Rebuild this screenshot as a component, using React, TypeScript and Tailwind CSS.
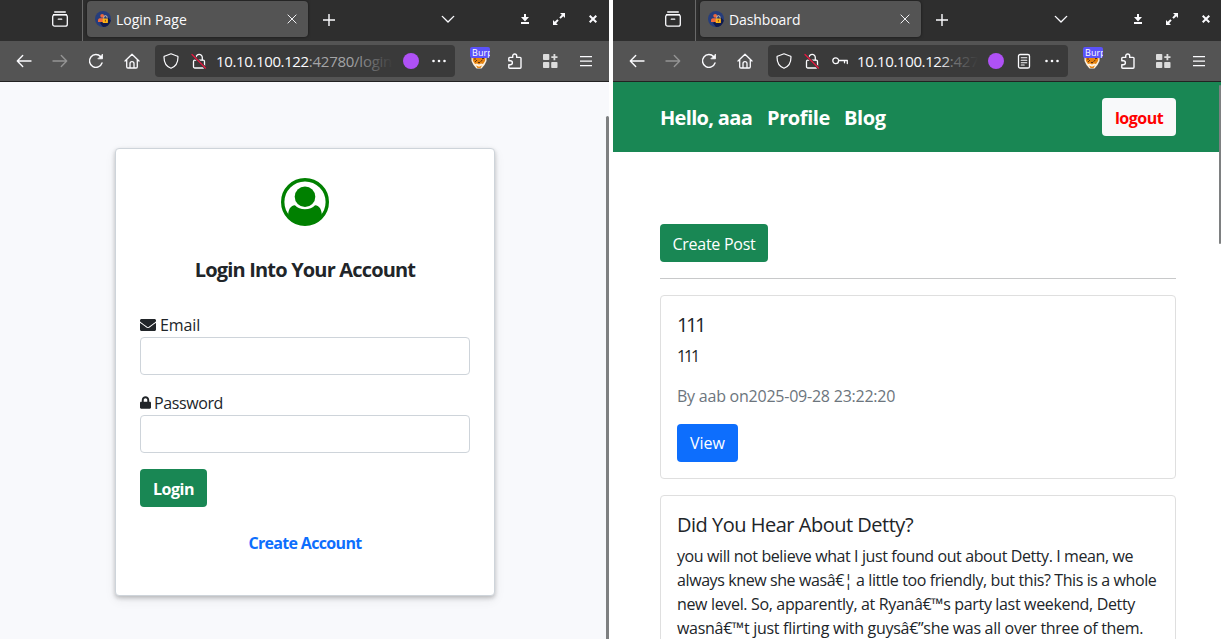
import type { ReactNode } from "react";
import { FaEnvelope, FaLock } from "react-icons/fa";

function Favicon() {
  return (
    <svg width="16" height="16" viewBox="0 0 16 16">
      <circle cx="8" cy="8" r="8" fill="#263d7c" />
      <path d="M8 16a8 8 0 0 0 7.8-6.5L12.5 6 5 12z" fill="#101a4c" />
      <circle cx="7.2" cy="4.8" r="1.9" fill="#f0683c" />
      <path d="M3 11V9.2C3 7.5 4.6 7.2 6 7.2h2.5V11z" fill="#f0683c" />
      <path d="M8.7 7.5V6.4a1.7 1.7 0 0 1 3.4 0v1.1" fill="none" stroke="#e4cfb0" strokeWidth="0.9" />
      <rect x="7.7" y="7.4" width="5.2" height="4.6" rx="0.6" fill="#fbb316" />
      <rect x="9.9" y="8.8" width="0.9" height="1.8" fill="#7a3c10" />
    </svg>
  );
}

function Stroke({ children, size = 16, className = "", width = 1.3 }: { children: ReactNode; size?: number; className?: string; width?: number }) {
  return (
    <svg width={size} height={size} viewBox="0 0 16 16" fill="none" stroke="currentColor" strokeWidth={width} strokeLinecap="round" strokeLinejoin="round" className={"shrink-0 " + className}>
      {children}
    </svg>
  );
}

function TabBar({ title, tight }: { title: string; tight?: boolean }) {
  return (
    <div className="flex h-[41px] bg-[#2e2e2e] text-[#fbfbfe]">
      <div className="flex w-[83px] shrink-0 items-center justify-end border-r border-[#696969] pr-[14px] pb-[3px]">
        <Stroke size={16}>
          <path d="M2.7 1h10.6M1.5 3.7h13" />
          <rect x="0.7" y="3.8" width="14.6" height="11.4" rx="2" />
          <path d="M6.3 8.2h3.4" />
        </Stroke>
      </div>
      <div className="mt-px ml-1 flex h-9 w-[221px] shrink-0 items-center rounded bg-[#545454] pr-[11px] pl-2 shadow-[0_0_3px_#00000088]">
        <Favicon />
        <span className={tight ? "ml-[5px] pt-0.5 text-sm tracking-[-0.1px]" : "ml-[5px] pt-0.5 text-sm"}>{title}</span>
        <Stroke size={10} className="ml-auto" width={1.5}>
          <path d="m1.5 1.5 13 13m0-13-13 13" />
        </Stroke>
      </div>
      <Stroke size={12} className="mt-[14px] ml-[15px]" width={1.9}>
        <path d="M8 .5v15M.5 8h15" />
      </Stroke>
      <Stroke size={14} className="mt-[12px] ml-[106px]" width={1.6}>
        <path d="m1.5 5 6.5 6.5L14.5 5" />
      </Stroke>
      <svg width="10" height="12" viewBox="0 0 10 12" fill="currentColor" className="mt-[13px] ml-[65px] shrink-0">
        <path d="M4 1h2v3h3L5 8.5 1 4h3zM1 9h8v2H1z" />
      </svg>
      <svg width="12" height="12" viewBox="0 0 12 12" fill="currentColor" className="mt-[13px] ml-[23px] shrink-0">
        <path d="M7 0h5v5l-1.7-1.7-2.6 2.5-1.4-1.4 2.5-2.6zM0 7l1.7 1.7 2.6-2.5 1.4 1.4-2.5 2.6L5 12H0z" />
      </svg>
      <svg width="8" height="8" viewBox="0 0 8 8" stroke="currentColor" strokeWidth="2" className="mt-[15px] ml-[24px] shrink-0">
        <path d="m.7.7 6.6 6.6m0-6.6L.7 7.3" />
      </svg>
    </div>
  );
}

function FoxBadge() {
  return (
    <div className="relative mt-[6px] h-[23px] w-5 shrink-0">
      <svg width="16" height="15" viewBox="0 0 16 15" className="absolute top-[7px] left-[1px]">
        <path d="M.5 0h15v7l-2 4-3 3.500h-5L2.500 11l-2-4z" fill="#fff1dd" />
        <path d="M1.500 3h13l-.5 4-2 3-2-.5-2 1-2-1-2 .5-2-3z" fill="#e8850f" />
        <path d="m5 11.500 3 1.200 3-1.200-1.500 2.500h-3z" fill="#e8850f" />
        <path d="m4 8 2-2M9.500 7.500l2-1.500M7 8.500h2M3 5h2M11 4.500h2" stroke="#5d3210" strokeWidth="1" fill="none" />
      </svg>
      <span className="absolute top-0 left-0 h-[11px] w-5 overflow-hidden rounded-[2px] bg-[#5b52fa] pl-[2px] text-[9px] leading-[11px] tracking-[0.1px] text-white">
        Burp
      </span>
    </div>
  );
}

function ToolBar({ path, saved }: { path: string; saved?: boolean }) {
  return (
    <div className="flex h-[41px] border-b border-[#222] bg-[#545454] text-[#fbfbfe]">
      <Stroke className="mt-[12px] ml-4" width={1.4}>
        <path d="M15 8H1.3M6.7 2.6 1.3 8l5.4 5.4" />
      </Stroke>
      <Stroke className="mt-[12px] ml-5 text-[#949494]" width={1.4}>
        <path d="M1 8h13.7M9.3 2.6 14.7 8l-5.4 5.4" />
      </Stroke>
      <Stroke className="mt-[12px] ml-5" width={1.4}>
        <path d="M14 10a6.4 6.4 0 1 1-1.3-6.3" />
        <path d="M14.5 1.5v4.3h-4.3z" fill="currentColor" strokeWidth="0.8" />
      </Stroke>
      <Stroke className="mt-[12px] ml-5" width={1.3}>
        <path d="m1 8 7-6.7L15 8M2.700 6.700v7c0 .8.4 1.300 1.200 1.300h8.200c.8 0 1.200-.5 1.200-1.300v-7M6 15v-4.500c0-2.600 4-2.600 4 0V15" />
      </Stroke>
      <div className="mt-1 ml-[15px] flex h-8 w-[300px] shrink-0 items-center rounded bg-[#3a3a3a] pl-2">
        <Stroke width={1.2}>
          <path d="M8 .8 1.500 3.200c-.4.1-.5.4-.5.8C1 9.500 3 13.500 8 15.300c5-1.800 7-5.800 7-11.300 0-.4-.1-.7-.5-.8z" />
        </Stroke>
        <Stroke className="ml-3" width={1.3}>
          <path d="M5 7V4.600C5 .4 11.300.4 11.300 4.600V7" />
          <rect x="2.500" y="7.200" width="11" height="7.800" rx="1.300" />
          <path d="m1.500 2 13 13" stroke="#3a3a3a" strokeWidth="2.500" />
          <path d="m1 1.500 13.500 13.500" stroke="#e0183f" strokeWidth="1.400" />
        </Stroke>
        {saved && (
          <Stroke className="ml-3" width={1.3}>
            <circle cx="3.700" cy="7.700" r="2.900" />
            <path d="M6.700 7.500h8.600v3M12.500 7.500v2.300" />
          </Stroke>
        )}
        <div className={saved ? "relative ml-[9px] w-[121px] overflow-hidden text-[15px] whitespace-nowrap" : "relative ml-[9px] w-[177px] overflow-hidden text-[15px] whitespace-nowrap"}>
          <span className="tracking-[-0.37px]">10.10.100.122</span>
          <span className="tracking-[-0.25px] text-[#a4a4a6]">{path}</span>
          <div className="absolute inset-y-0 right-0 w-[42px] bg-linear-to-r from-[#3a3a3a00] to-[#3a3a3a]" />
        </div>
        <div className="ml-[10px] size-4 shrink-0 rounded-full bg-[#af51f5]" />
        {saved && (
          <Stroke className="ml-3" width={1.3}>
            <rect x="2.500" y="1.500" width="11" height="13.500" rx="1.600" />
            <path d="M5.200 4.800h5.600M5.200 7.300h5.600M5.200 9.700h5.600M5.200 12h3" strokeWidth="1.100" />
          </Stroke>
        )}
        <svg width="16" height="16" viewBox="0 0 16 16" fill="currentColor" className="ml-3 shrink-0">
          <circle cx="2.500" cy="8" r="1.300" />
          <circle cx="8" cy="8" r="1.300" />
          <circle cx="13.500" cy="8" r="1.300" />
        </svg>
      </div>
      <div className="ml-[15px] flex">
        <FoxBadge />
      </div>
      <Stroke className="mt-[12px] ml-[17px]" width={1.4}>
        <path d="M1.800 7V5.300c0-.6.3-.9.9-.9h3V3c0-2.700 4-2.700 4 0v1.400h3.400c.6 0 .9.3.9.9v9c0 .6-.3.9-.9.900H2.700c-.6 0-.9-.3-.9-.9v-2.500h1.400c2.900 0 2.900-4 0-4H1.800z" />
      </Stroke>
      <svg width="15" height="14" viewBox="0 0 15 14" fill="#dcdcdc" className="mt-[13px] ml-[20px] shrink-0">
        <rect width="6.300" height="6" rx="0.800" />
        <rect y="8" width="6.300" height="6" rx="0.800" />
        <rect x="8.200" y="8" width="6.300" height="6" rx="0.800" />
        <path d="M10.500 0h1.800v2.200h2.200V4h-2.200v2.200h-1.800V4H8.300V2.200h2.200z" />
      </svg>
      <svg width="12" height="11" viewBox="0 0 12 11" fill="currentColor" className="mt-[15px] ml-[22px] shrink-0">
        <path d="M0 0h12v1.300H0zM0 4.500h12v1.300H0zM0 9h12v1.300H0z" />
      </svg>
    </div>
  );
}

function UserCircle() {
  return (
    <svg width="48" height="48" viewBox="0 0 48 48" fill="#008000">
      <circle cx="24" cy="24" r="22.300" fill="none" stroke="#008000" strokeWidth="3.400" />
      <circle cx="24" cy="18.800" r="10.300" />
      <path d="M7.200 36.500c.2-4.500 2-8.800 6.700-9.200 2.400 2.500 6 4 10.100 4s7.700-1.500 10.100-4c4.700.4 6.500 4.700 6.700 9.200C37.500 42 31.500 46.500 24 46.500S10.500 42 7.200 36.500z" />
    </svg>
  );
}

function LoginPage() {
  return (
    <div className="relative flex-1 bg-[#f8f9fc] pt-[66px] text-[#212529]">
      <div className="ml-[115px] flex h-[448px] w-[380px] flex-col rounded border border-[#ced4da] bg-white px-6 pt-[29px] shadow-[0_2px_4px_#00000038,0_4px_12px_#00000012]">
        <div className="flex justify-center">
          <UserCircle />
        </div>
        <h1 className="mt-8 text-center text-xl leading-6 font-[680] tracking-[-0.83px]">Login Into Your Account</h1>
        <label className="mt-[31px] flex h-6 items-center text-base tracking-[-0.1px]">
          <FaEnvelope className="mr-[4px] size-4" /> Email
        </label>
        <input className="h-[38px] shrink-0 rounded border border-[#ced4da] bg-white" />
        <label className="mt-4 flex h-6 items-center tracking-[-0.39px]">
          <FaLock className="mr-[3px] mb-px h-[13px] w-[11px]" /> Password
        </label>
        <input type="password" className="h-[38px] shrink-0 rounded border border-[#ced4da] bg-white" />
        <button className="mt-4 h-[38px] w-[67px] shrink-0 rounded bg-[#198754] pt-px font-[680] tracking-[-0.5px] text-white">Login</button>
        <a className="mt-6 text-center leading-6 font-[680] tracking-[-0.68px] text-[#0d6efd]">Create Account</a>
      </div>
      <div className="absolute top-[34px] right-0 bottom-0 w-[3px] rounded-t-full bg-[#7e8081]" />
    </div>
  );
}

function Dashboard() {
  return (
    <div className="relative flex min-h-0 flex-1 flex-col overflow-hidden bg-white text-[#212529]">
      <nav className="flex h-[70px] shrink-0 items-center bg-[#198754] pr-[45px] pl-[47px] text-xl font-[680] text-white">
        <span className="w-[107px] pt-0.5 tracking-[-0.68px]">Hello, aaa</span>
        <span className="w-[77px] pt-0.5 tracking-[-0.4px]">Profile</span>
        <span className="pt-0.5 tracking-[-0.35px]">Blog</span>
        <button className="ml-auto h-[38px] w-[74px] rounded bg-[#f8f9fa] pt-px text-base font-[680] tracking-[-0.5px] text-[red]">logout</button>
      </nav>
      <main className="flex w-[563px] flex-col pt-[72px] pl-[47px]">
        <button className="h-[38px] w-[108px] shrink-0 rounded bg-[#198754] pt-px tracking-[-0.26px] text-white">Create Post</button>
        <hr className="my-4 border-[#c8c9ca]" />
        <article className="h-[184px] shrink-0 rounded border border-[#dfdfdf] p-4">
          <h2 className="mt-px text-xl leading-6 tracking-[-2.4px]">111</h2>
          <p className="mt-[7px] leading-6 tracking-[-2.2px]">111</p>
          <p className="mt-4 leading-6 tracking-[-0.23px] text-[#6c757d]">By aab on2025-09-28 23:22:20</p>
          <button className="mt-4 h-[38px] w-[61px] rounded bg-[#0d6efd] text-white">View</button>
        </article>
        <article className="mt-4 h-[240px] shrink-0 rounded border border-[#dfdfdf] p-4 whitespace-nowrap">
          <h2 className="mt-px text-xl leading-6 tracking-[-0.49px]">Did You Hear About Detty?</h2>
          <p className="mt-[7px] leading-6">
            <span className="block tracking-[-0.4px]">you will not believe what I just found out about Detty. I mean, we</span>
            <span className="block tracking-[-0.4px]">always knew she wasâ€¦ a little too friendly, but this? This is a whole</span>
            <span className="block tracking-[-0.34px]">new level. So, apparently, at Ryanâ€™s party last weekend, Detty</span>
            <span className="block tracking-[-0.29px]">wasnâ€™t just flirting with guysâ€”she was all over three of them.</span>
          </p>
        </article>
      </main>
      <div className="absolute top-[3px] right-0 h-[159px] w-[2px] rounded-full bg-[#7e8081]" />
    </div>
  );
}

export default function App() {
  return (
    <div className="flex h-[639px] w-[1221px] gap-1 overflow-hidden bg-white font-['Open_Sans','Noto_Sans',sans-serif]">
      <section className="flex w-[609px] shrink-0 flex-col overflow-hidden">
        <TabBar title="Login Page" />
        <ToolBar path=":42780/login" />
        <LoginPage />
      </section>
      <section className="flex w-[608px] shrink-0 flex-col overflow-hidden">
        <TabBar title="Dashboard" tight />
        <ToolBar path=":42780/dashboard" saved />
        <Dashboard />
      </section>
    </div>
  );
}
